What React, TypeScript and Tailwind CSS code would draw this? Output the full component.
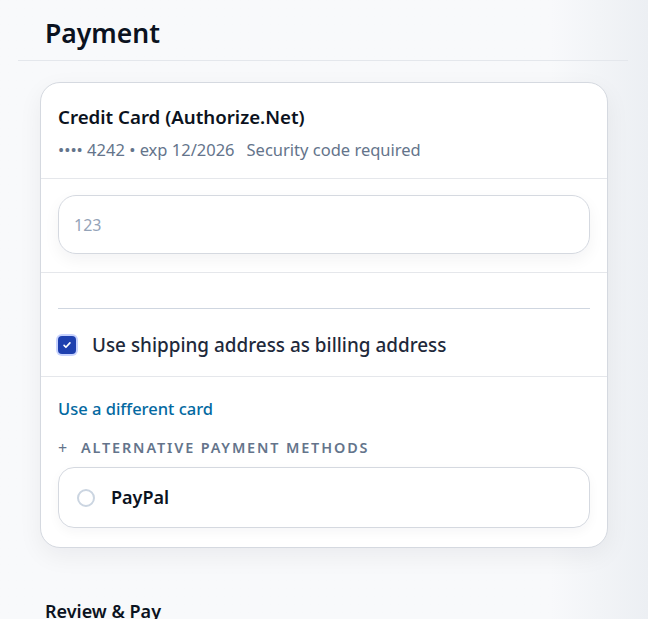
export default function App() {
  return (
    <div
      className="min-h-[619px] w-full bg-gradient-to-r from-[#f8f9fb] from-85% to-[#eceff3] text-[#0f172a]"
      style={{ fontFamily: '"Noto Sans", sans-serif' }}
    >
      <div className="px-[18px] pt-[14px]">
        <h1 className="px-[27px] text-[26.5px] font-semibold leading-[38px] text-[#0b1220]">Payment</h1>
        <div className="mt-[8px] mr-[2px] h-px bg-[#e4e7ec]" />
      </div>

      <div className="px-[40px] pt-[21px]">
        <div className="overflow-hidden rounded-[20px] border border-[#d5d9e0] bg-white shadow-[0_8px_24px_rgba(15,23,42,0.06)]">
          {/* saved card */}
          <div className="border-b border-[#e5e7eb] px-[17px] pt-[21px] pb-[17px]">
            <div className="text-[18.7px] font-semibold leading-[26px] text-[#0b1220]">Credit Card (Authorize.Net)</div>
            <div className="mt-[9px] flex gap-[12px] text-[16.5px] leading-[22px] text-[#64748b]">
              <span>•••• 4242 • exp 12/2026</span>
              <span>Security code required</span>
            </div>
          </div>

          {/* cvv */}
          <div className="border-b border-[#e5e7eb] px-[17px] pt-[16px] pb-[18px]">
            <input
              placeholder="123"
              className="h-[59px] w-full rounded-[18px] border border-[#d5d9e0] bg-white px-[15px] text-[16px] text-[#0f172a] shadow-[0_6px_16px_rgba(15,23,42,0.05)] outline-none placeholder:text-[#94a3b8]"
            />
          </div>

          {/* billing */}
          <div className="border-b border-[#e5e7eb] px-[17px] pt-[35px] pb-[19px]">
            <div className="h-px bg-[#cfd6e0]" />
            <label className="mt-[24px] flex items-center gap-[16px]">
              <span className="flex h-[18px] w-[18px] items-center justify-center rounded-[4px] bg-[#1e40af] ring-2 ring-[#c7d2fe]">
                <svg viewBox="0 0 12 12" className="h-[10px] w-[10px]" fill="none" stroke="white" strokeWidth="2" strokeLinecap="round" strokeLinejoin="round">
                  <path d="M2.5 6.5l2.2 2.2L9.5 3.5" />
                </svg>
              </span>
              <span className="text-[18.9px] font-medium leading-[24px] text-[#1e293b]">Use shipping address as billing address</span>
            </label>
          </div>

          {/* alternatives */}
          <div className="px-[17px] pt-[20px] pb-[19px]">
            <a className="text-[16.5px] font-medium leading-[24px] text-[#0369a1]">Use a different card</a>
            <div className="mt-[17px] flex items-center gap-[12px] text-[14.4px] font-semibold uppercase leading-[20px] tracking-[0.13em] text-[#64748b]">
              <span className="text-[16px] font-normal">+</span>
              <span>Alternative payment methods</span>
            </div>
            <div className="mt-[9px] flex h-[61px] items-center gap-[16px] rounded-[16px] border border-[#d5d9e0] bg-white px-[18px] shadow-[0_4px_12px_rgba(15,23,42,0.04)]">
              <span className="h-[18px] w-[18px] rounded-full border-2 border-[#cbd5e1] bg-white" />
              <span className="text-[18px] font-semibold text-[#0b1220]">PayPal</span>
            </div>
          </div>
        </div>
      </div>

      <div className="px-[45px] pt-[50px] text-[18px] font-semibold text-[#0b1220]">Review &amp; Pay</div>
    </div>
  );
}
